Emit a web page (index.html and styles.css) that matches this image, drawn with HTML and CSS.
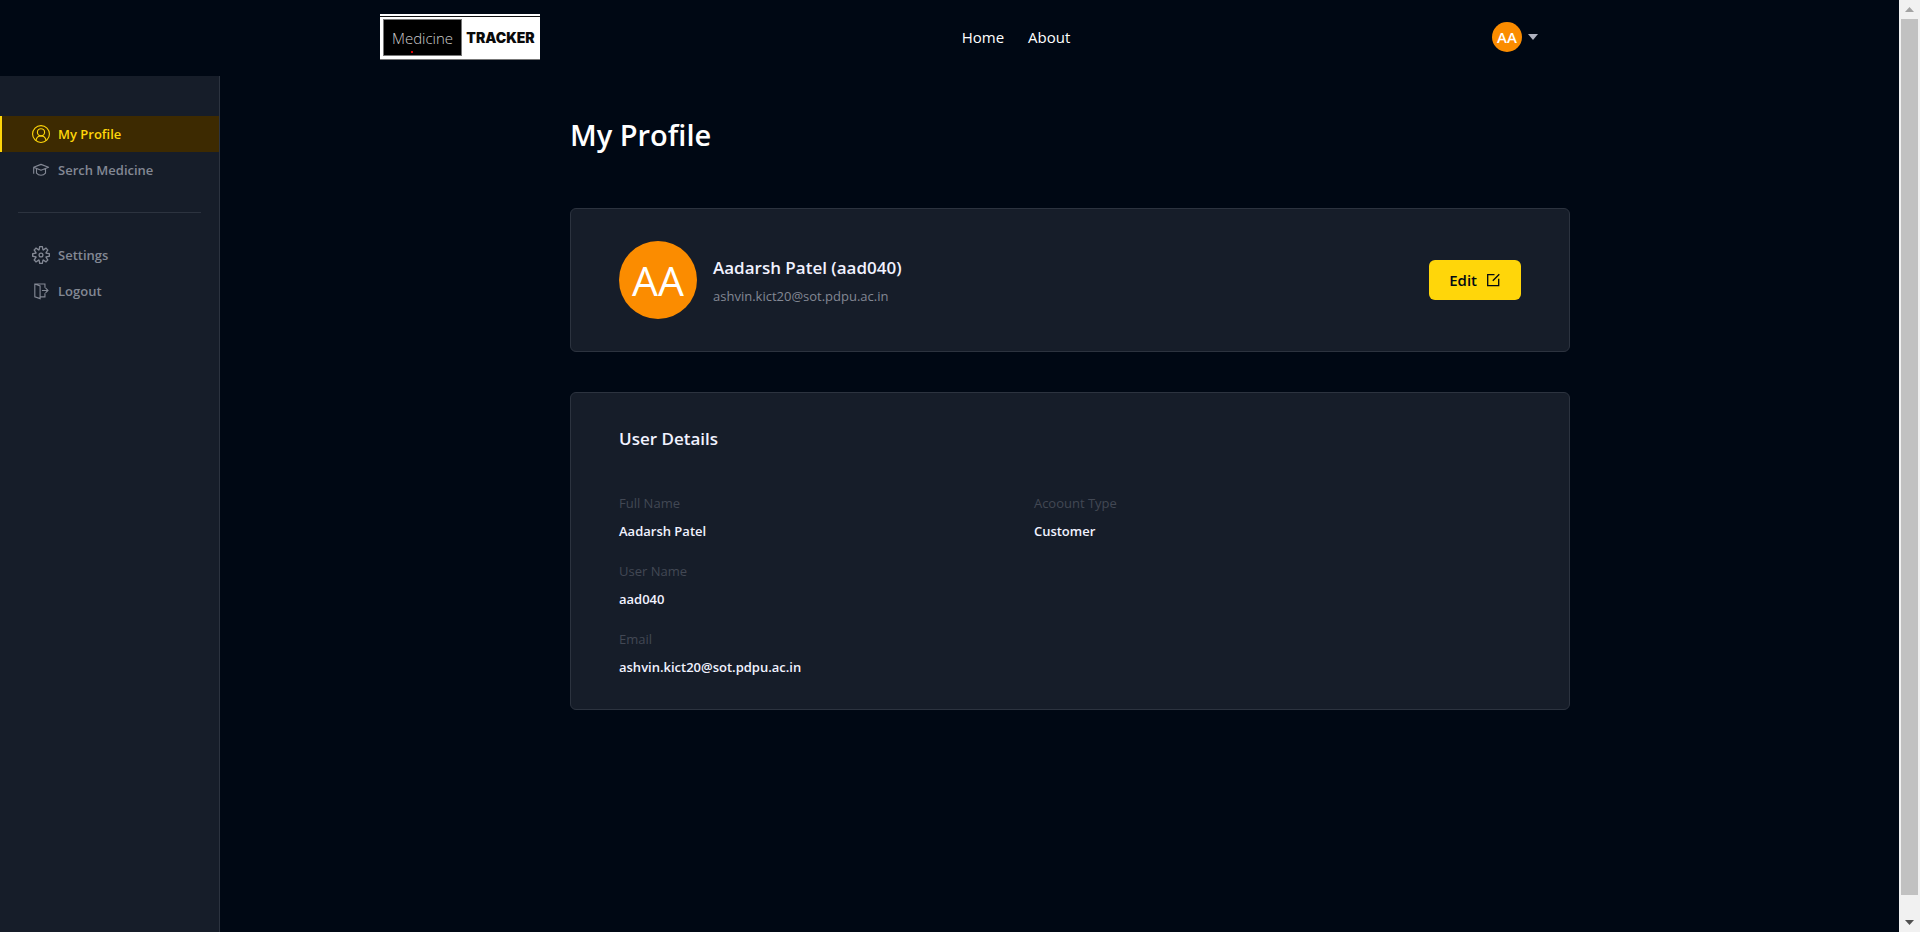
FILE: index.html
```html
<!DOCTYPE html>
<html lang="en">
<head>
<meta charset="utf-8">
<meta name="viewport" content="width=device-width, initial-scale=1">
<title>My Profile</title>
<link rel="stylesheet" href="styles.css">
</head>
<body>
<header class="topbar">
  <div class="topbar-inner">
    <a class="logo" href="#">
      <span class="logo-dark">Medicine<span class="logo-dot"></span></span>
      <span class="logo-light">TRACKER</span>
    </a>
    <nav class="nav">
      <a href="#">Home</a>
      <a href="#">About</a>
    </nav>
    <button class="account" type="button" aria-label="Account menu">
      <span class="avatar avatar-small">AA</span>
      <svg class="caret" viewBox="0 0 10 6" aria-hidden="true"><path d="M0 0h10L5 6z" fill="currentColor"/></svg>
    </button>
  </div>
</header>
<div class="layout">
  <aside class="sidebar">
    <a class="side-link active" href="#">
      <svg class="side-icon" viewBox="0 0 16 16" fill="none" stroke="currentColor" aria-hidden="true"><circle cx="8" cy="8" r="7.5"/><circle cx="8" cy="6.5" r="3.2"/><path d="M3.5 14c.3-2.500 2.200-4.200 4.500-4.200s4.200 1.700 4.500 4.200"/></svg>
      <span>My Profile</span>
    </a>
    <a class="side-link" href="#">
      <svg class="side-icon" viewBox="0 0 16 16" fill="none" stroke="currentColor" stroke-linejoin="round" aria-hidden="true"><path d="M1.500 5.500 8 3l6.700 2.500L8 8.200zM1.500 5.500v5.800M4 6.800v4C5 12 6.400 12.700 8 12.700s3-.7 4-1.900v-4"/></svg>
      <span>Serch Medicine</span>
    </a>
    <hr class="divider">
    <a class="side-link" href="#">
      <svg class="side-icon" viewBox="0 0 24 24" fill="currentColor" fill-rule="evenodd" aria-hidden="true"><path d="M19.850 8.750l4.150.83v4.840l-4.150.83 2.350 3.520-3.430 3.430-3.520-2.350-.83 4.150H9.580l-.83-4.150-3.520 2.350-3.430-3.430 2.350-3.520L0 14.420V9.580l4.150-.83L1.800 5.230 5.230 1.800l3.520 2.350L9.580 0h4.840l.83 4.150 3.520-2.350 3.430 3.430-2.350 3.520zm-1.570 5.070l4-.81v-2l-4-.81-.54-1.300 2.290-3.430-1.430-1.430-3.430 2.290-1.300-.54-.81-4h-2l-.81 4-1.300.54-3.430-2.290-1.430 1.430L6.380 8.900l-.54 1.300-4 .81v2l4 .81.54 1.300-2.290 3.430 1.430 1.430 3.430-2.290 1.300.54.81 4h2l.81-4 1.300-.54 3.430 2.290 1.430-1.430-2.290-3.430.54-1.300zM12 8.570a3.430 3.430 0 1 1 0 6.860 3.430 3.430 0 0 1 0-6.860zm0 1.720a1.710 1.710 0 1 0 0 3.420 1.710 1.710 0 0 0 0-3.420z"/></svg>
      <span>Settings</span>
    </a>
    <a class="side-link" href="#">
      <svg class="side-icon" viewBox="0 0 16 16" fill="none" stroke="currentColor" aria-hidden="true"><path d="M11.500 5V1.800h-9v11.400L7.200 14.800V3.500L2.500 1.800M7.200 13.200h4.300V10M8.800 7.500H14M12 5.300l2.200 2.200L12 9.700"/></svg>
      <span>Logout</span>
    </a>
  </aside>
  <main class="main">
    <div class="content">
      <h1 class="page-title">My Profile</h1>
      <section class="card summary">
        <div class="identity">
          <span class="avatar avatar-large">AA</span>
          <div class="identity-text">
            <p class="heading">Aadarsh Patel (aad040)</p>
            <p class="email">ashvin.kict20@sot.pdpu.ac.in</p>
          </div>
        </div>
        <button class="edit" type="button">Edit
          <svg class="edit-icon" viewBox="0 0 16 16" fill="none" stroke="currentColor" stroke-width="1.300" aria-hidden="true"><path d="M9.500 2.700H2.700v11h11V6.800M7.800 8.700 14.300 2.200"/></svg>
        </button>
      </section>
      <section class="card details">
        <h2 class="heading">User Details</h2>
        <div class="columns">
          <dl class="fields">
            <div class="field"><dt>Full Name</dt><dd>Aadarsh Patel</dd></div>
            <div class="field"><dt>User Name</dt><dd>aad040</dd></div>
            <div class="field"><dt>Email</dt><dd>ashvin.kict20@sot.pdpu.ac.in</dd></div>
          </dl>
          <dl class="fields">
            <div class="field"><dt>Acoount Type</dt><dd>Customer</dd></div>
          </dl>
        </div>
      </section>
    </div>
  </main>
</div>
<div class="scrollbar" aria-hidden="true">
  <svg class="scroll-arrow" viewBox="0 0 9 5"><path d="M0 5 4.500 0 9 5z" fill="#a3a3a3"/></svg>
  <div class="scroll-track"><div class="scroll-thumb"></div></div>
  <svg class="scroll-arrow" viewBox="0 0 9 5"><path d="M0 0h9L4.500 5z" fill="#505050"/></svg>
</div>
</body>
</html>
```
FILE: styles.css
```css
* { box-sizing: border-box; }

body {
  margin: 0;
  min-height: 100vh;
  display: flex;
  flex-direction: column;
  background: #000814;
  color: #f1f2ff;
  font: 13px/20px "Open Sans", "Noto Sans", sans-serif;
}

h1, h2, p, dl, dd { margin: 0; }
a { color: inherit; text-decoration: none; }
button { border: 0; font: inherit; cursor: pointer; }

.topbar { padding: 14px 20px 16px; }
.topbar-inner {
  max-width: 1160px;
  margin: 0 auto;
  display: flex;
  align-items: flex-start;
  justify-content: space-between;
}

.logo {
  width: 160px;
  height: 46px;
  display: flex;
  align-items: stretch;
  padding: 6px 0 4px 4px;
  background: linear-gradient(#fff 2px, #111 2px, #111 3px, #fff 3px);
  border-bottom: 1px solid #777;
}
.logo-dark {
  position: relative;
  width: 77px;
  display: flex;
  align-items: center;
  justify-content: center;
  background: #000;
  color: #ccc;
  font-size: 15px;
  font-weight: 300;
  outline: 1px solid #777;
}
.logo-dot {
  position: absolute;
  left: 27px;
  bottom: 2px;
  width: 2px;
  height: 2px;
  background: #d00;
}
.logo-light {
  flex: 1;
  display: flex;
  align-items: center;
  justify-content: center;
  color: #0a0a0a;
  font: 900 14px/20px Inter, sans-serif;
}

.nav {
  display: flex;
  gap: 24px;
  padding-top: 11px;
  color: #fff;
  font-size: 15px;
  line-height: 24px;
}

.account {
  display: flex;
  align-items: center;
  gap: 6px;
  padding: 8px 2px 0 0;
  background: none;
  color: #afb2bf;
}
.caret { width: 10px; height: 6px; }

.avatar {
  display: flex;
  align-items: center;
  justify-content: center;
  border-radius: 50%;
  background: #fb8c00;
  color: #fff;
}
.avatar-small { width: 30px; height: 30px; font-size: 15px; font-weight: 600; }
.avatar-large { width: 78px; height: 78px; font-size: 41px; }

.layout { flex: 1; display: flex; }

.sidebar {
  width: 220px;
  padding-top: 40px;
  background: #161d29;
  border-right: 1px solid #2c333f;
}
.side-link {
  display: flex;
  align-items: center;
  gap: 8px;
  height: 36px;
  padding-left: 30px;
  border-left: 2px solid transparent;
  color: #838894;
  font-weight: 600;
}
.side-link.active {
  border-color: #ffd60a;
  background: #3d2a01;
  color: #ffd60a;
}
.side-icon { width: 18px; height: 18px; }
.divider {
  height: 1px;
  margin: 24px 18px;
  border: 0;
  background: #2c333f;
}

.main { flex: 1; padding: 40px; }
.content { max-width: 1000px; margin: 0 auto; }
.page-title {
  margin-bottom: 54px;
  color: #fff;
  font-size: 29px;
  line-height: 38px;
  font-weight: 600;
}

.card {
  padding: 32px 48px;
  border: 1px solid #2c333f;
  border-radius: 6px;
  background: #161d29;
}
.heading { font-size: 17px; line-height: 28px; font-weight: 600; }

.summary {
  display: flex;
  align-items: center;
  justify-content: space-between;
}
.identity { display: flex; align-items: center; gap: 16px; }
.identity-text { display: flex; flex-direction: column; gap: 4px; }
.email { color: #838894; }

.edit {
  display: flex;
  align-items: center;
  gap: 8px;
  padding: 8px 20px;
  border-radius: 6px;
  background: #ffd60a;
  color: #000814;
  font-size: 15px;
  line-height: 24px;
  font-weight: 600;
}
.edit-icon { width: 16px; height: 16px; }

.details {
  margin-top: 40px;
  display: flex;
  flex-direction: column;
  gap: 40px;
}
.columns { display: grid; grid-template-columns: 46% 1fr; }
.fields { display: flex; flex-direction: column; gap: 20px; }
.field { display: flex; flex-direction: column; gap: 8px; }
.field dt { color: #424854; }
.field dd { font-weight: 600; }

/* Scroll track drawn over the page's right edge */
.scrollbar {
  position: fixed;
  top: 0;
  right: 0;
  bottom: 0;
  width: 21px;
  padding: 7px 2px;
  display: flex;
  flex-direction: column;
  align-items: center;
  gap: 7px;
  background: #f1f1f1;
}
.scroll-arrow { width: 9px; height: 5px; }
.scroll-track { flex: 1; width: 17px; }
.scroll-thumb { height: 98%; background: #c1c1c1; }
```
